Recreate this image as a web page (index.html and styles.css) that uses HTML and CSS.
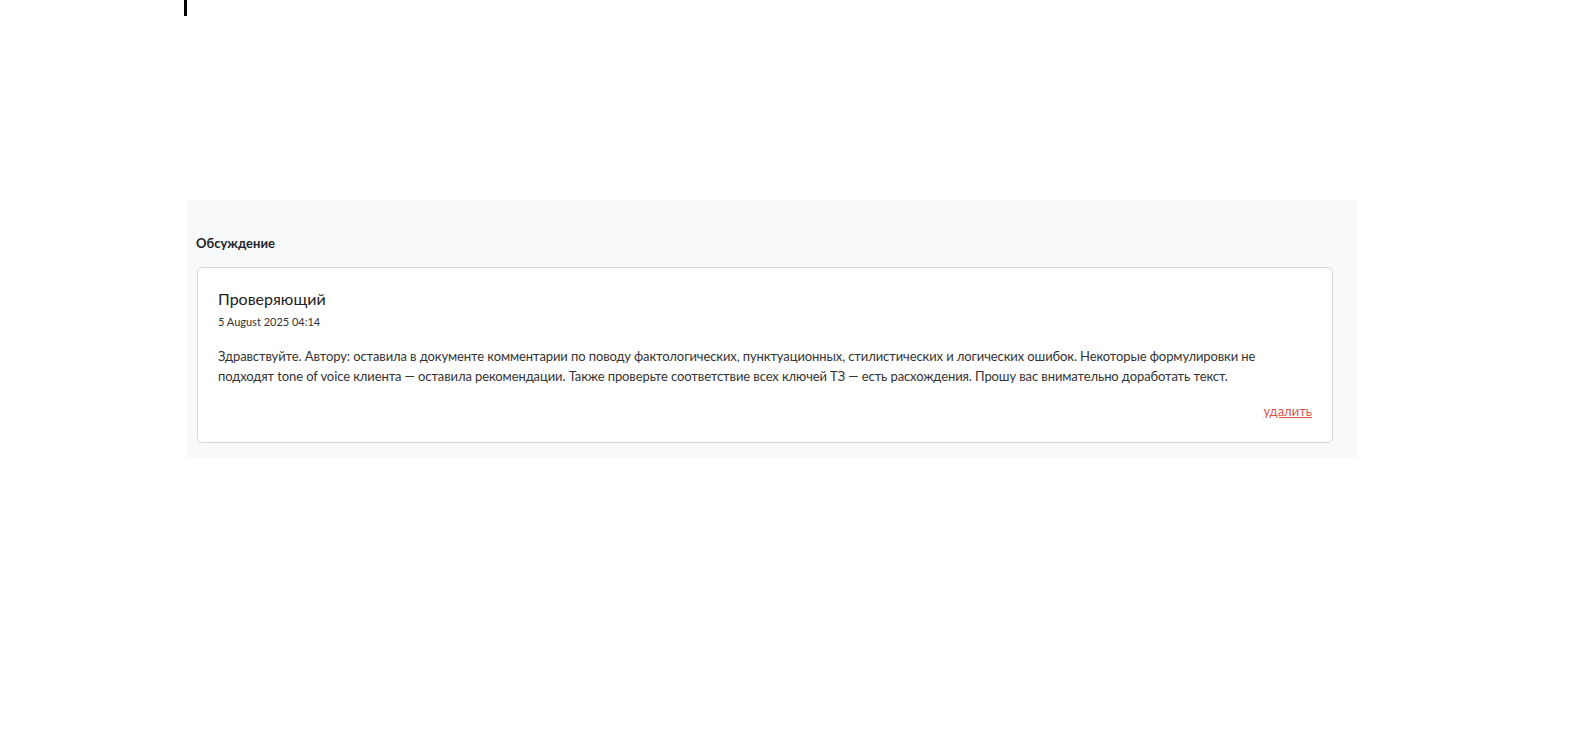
FILE: index.html
```html
<!DOCTYPE html>
<html>
<head>
	<meta charset="utf-8">
	<title>Обсуждение</title>
	<link rel="stylesheet" href="styles.css">
</head>
<body>
	<div class="caret"></div>

	<div class="discussion">
		<h4 class="discussion-title">Обсуждение</h4>

		<div class="comment">
			<div class="comment-author">Проверяющий</div>
			<div class="comment-date">5 August 2025 04:14</div>
			<p class="comment-text">Здравствуйте. Автору: оставила в документе комментарии по поводу фактологических, пунктуационных, стилистических и логических ошибок. Некоторые формулировки не подходят tone of voice клиента — оставила рекомендации. Также проверьте соответствие всех ключей ТЗ — есть расхождения. Прошу вас внимательно доработать текст.</p>
			<div class="comment-actions">
				<a href="#" class="comment-delete">удалить</a>
			</div>
		</div>
	</div>
</body>
</html>
```

FILE: styles.css
```css
*{
	margin: 0;
	padding: 0;
	box-sizing: border-box;
}

body{
	font-family: Lato, "Noto Sans", sans-serif;
	color: #212529;
	background: #fff;
}

.caret{
	width: 3px;
	height: 16px;
	margin-left: 184px;
	background: #000;
}

.discussion{
	width: 1170px;
	margin: 184px 0 0 187px;
	padding: 34px 24px 15px 10px;
	background: #f8f9fa;
}
.discussion-title{
	font-size: 13px;
	line-height: 18px;
	font-weight: 700;
	margin: 0 0 15px -1px;
}

.comment{
	background: #fff;
	border: 1px solid #d8d8d8;
	border-radius: 5px;
	padding: 20px 20px 22px 20px;
}
.comment-author{
	font-size: 16px;
	line-height: 22px;
	color: #222;
}
.comment-date{
	font-size: 11px;
	line-height: 16px;
	margin-top: 4px;
	color: #333;
}
.comment-text{
	font-size: 13px;
	line-height: 20px;
	letter-spacing: -0.1px;
	margin-top: 16px;
	color: #333;
}
.comment-actions{
	text-align: right;
	margin-top: 14px;
}
.comment-delete{
	font-size: 13px;
	line-height: 18px;
	color: #d9534f;
}
```
